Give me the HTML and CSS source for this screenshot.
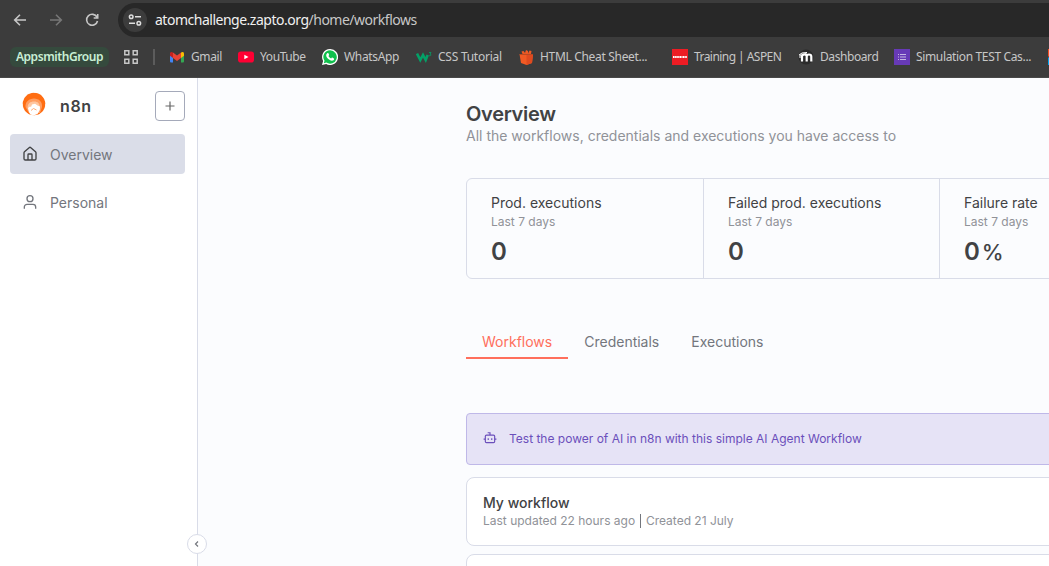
FILE: index.html
```html
<!DOCTYPE html>
<html lang="en">
<head>
<meta charset="utf-8">
<title>n8n - Workflows</title>
<link rel="stylesheet" href="styles.css">
</head>
<body>
<div class="browser">
  <div class="toolbar">
    <svg class="nav-icon" viewBox="0 0 16 16"><path d="M14 8H3M8 2.7 2.7 8 8 13.3"/></svg>
    <svg class="nav-icon dim" viewBox="0 0 16 16"><path d="M2 8h11M8 2.7 13.3 8 8 13.3"/></svg>
    <svg class="nav-icon" viewBox="0 0 16 16"><path d="M13 5.2A5.5 5.5 0 1 0 13.5 9M13.7 2v4H9.7"/></svg>
    <div class="address">
      <span class="site-info"><svg viewBox="0 0 14 14"><circle cx="3.2" cy="3.7" r="1.8"/><path d="M7 3.7h6M1 10.3h6"/><circle cx="10.8" cy="10.3" r="1.8"/></svg></span>
      <span class="url"><span class="host">atomchallenge.zapto.org</span><span class="path">/home/workflows</span></span>
    </div>
  </div>
  <div class="bookmarks">
    <span class="group">AppsmithGroup</span>
    <svg class="apps" viewBox="0 0 14 14"><path d="M.8.8h4v4h-4zM9.2.8h4v4h-4zM.8 9.2h4v4h-4zM9.2 9.2h4v4h-4z"/></svg>
    <span class="sep"></span>
    <div class="links">
      <a class="link"><svg viewBox="0 0 16 16"><path fill="#4285f4" d="M1 4h3v9.500H2a1 1 0 0 1-1-1z"/><path fill="#34a853" d="M12 5h3v7.500a1 1 0 0 1-1 1h-2z"/><path fill="#fbbc04" d="M12 3.500c1.500-1.200 3-.5 3 1v2.200L12 9z"/><path fill="#ea4335" d="M4 3.500 8 6.600l4-3.100V9l-4 3-4-3z"/><path fill="#c5221f" d="M1 4.500c0-1.500 1.500-2.200 3-1V9L1 6.700z"/></svg><span>Gmail</span></a>
      <a class="link"><svg viewBox="0 0 16 16"><rect y="2.500" width="16" height="11" rx="2.800" fill="#ff0033"/><path fill="#fff" d="m6.300 5.700 4.200 2.300-4.200 2.300z"/></svg><span>YouTube</span></a>
      <a class="link"><svg viewBox="0 0 16 16"><path fill="#fff" d="M8 0a8 8 0 1 1-3.800 15L0 16l1.100-4A8 8 0 0 1 8 0z"/><path fill="#10c04d" d="M8 1.300a6.700 6.700 0 1 1-3.600 12.300l-2.600.7.700-2.600A6.700 6.700 0 0 1 8 1.300z"/><path fill="#fff" d="M5.200 4.200c.8-.6 1.200-.2 1.500.6l.4 1c.1.500-.5.800-.7 1.200.6 1.200 1.500 2 2.700 2.500.5-.4.800-1.200 1.300-.9l1.500.8c.5.300.1 1.400-.4 1.800-1.800 1.300-4.700-.4-6.200-2.200C4 7.400 3.700 5.500 5.200 4.200z"/></svg><span class="t-whatsapp">WhatsApp</span></a>
      <a class="link"><svg viewBox="0 0 16 16"><path fill="none" stroke="#04a067" stroke-width="2.600" d="m1 4.500 3.300 6.500 2.700-5 2.700 5 2-5"/><path fill="none" stroke="#04a067" stroke-width=".8" d="M13 3.500h2l-1 1.700c1.500 0 1.300 2-.9 1.500"/></svg><span class="t-css">CSS Tutorial</span></a>
      <a class="link"><svg viewBox="0 0 16 16"><path fill="#f15a24" d="M1.500 5h3L3.500 2.500l2-.5L7 4l1-3 2 1v2.500l1.500-3 2 .5-.5 3h2l-1 9-5.500 2L3 14z"/><path fill="#e04a1f" d="M8.500 6H15l-1 8-5.500 2z"/><path stroke="#8a3a24" stroke-width=".6" d="M2 5.400h13"/></svg><span class="t-html">HTML Cheat Sheet...</span></a>
      <a class="link"><svg viewBox="0 0 16 16"><path fill="#ed1c24" d="M0 0h16v16H0z"/><path stroke="#fff" stroke-width="2" stroke-dasharray="1.500 .4 1 .4" d="M1 8h14"/></svg><span class="t-training">Training | ASPEN</span></a>
      <a class="link"><svg viewBox="0 0 16 16"><circle cx="8" cy="8" r="7.500" fill="#2b2b2b"/><path fill="none" stroke="#fff" stroke-width="2.200" d="M4 12.500V7.300C4 4.800 8.700 4.800 8.700 7.300v5.200M8.700 7.500c0-2.700 4.600-2.700 4.600 0v5"/><path fill="none" stroke="#fff" d="m1 6 3-2 5-.5-3 2.500H2v3"/></svg><span class="t-dashboard">Dashboard</span></a>
      <a class="link"><svg viewBox="0 0 16 16"><path fill="#673ab7" d="M0 0h16v16H0z"/><path stroke="#d1c4e9" stroke-width=".9" d="M4 5.500h1M6 5.500h6M4 8h1M6 8h6M4 10.500h1M6 10.500h6"/></svg><span class="t-simulation">Simulation TEST Cas...</span></a>
      <a class="link"><svg viewBox="0 0 16 16"><path fill="#f25022" d="M0 0h7.500v7.500H0z"/><path fill="#00a4ef" d="M0 8.500h7.500V16H0z"/></svg></a>
    </div>
  </div>
</div>
<div class="app">
  <aside class="sidebar">
    <div class="brand">
      <svg class="logo" viewBox="0 0 24 24"><circle cx="12" cy="12" r="11.300" fill="#ff6d12"/><circle cx="12" cy="12" r="11.800" fill="none" stroke="#fff" stroke-width=".8" stroke-dasharray="2 3"/><path fill="#ff9d61" d="M3.500 15c-.5-5 3.500-8.500 8.500-8.500s8.500 3.500 8 8.500l-2 6H7z"/><path fill="#ffc6a0" d="M5.500 16c0-4.500 2.700-6.500 6.500-6.500s6 2 5.500 6.500l-3 6H8z"/><path fill="#fff" d="m6 16 2-1.500 1 .5 1-2.500 3-.7 2.500 1.700 2.500 1-.2 3.500-2.300 4-4 1.500-3-1L7 20z"/><path fill="none" stroke="#ffad7a" d="m9 18.500 2.500-2 3 1.500"/></svg>
      <span class="brand-name">n8n</span>
      <button class="add"><svg viewBox="0 0 12 12"><path d="M6 1.500v9M1.500 6h9"/></svg></button>
    </div>
    <a class="item active"><svg viewBox="0 0 24 24"><path d="M15 21v-8a1 1 0 0 0-1-1h-4a1 1 0 0 0-1 1v8"/><path d="M3 10a2 2 0 0 1 .7-1.500l7-6a2 2 0 0 1 2.600 0l7 6A2 2 0 0 1 21 10v9a2 2 0 0 1-2 2H5a2 2 0 0 1-2-2z"/></svg><span>Overview</span></a>
    <a class="item"><svg viewBox="0 0 24 24"><circle cx="12" cy="7" r="4.500"/><path d="M3.500 22v-2.500a4 4 0 0 1 4-4h9a4 4 0 0 1 4 4V22"/></svg><span>Personal</span></a>
    <button class="collapse"><svg viewBox="0 0 8 8"><path d="M5 1.500 2.500 4 5 6.500"/></svg></button>
  </aside>
  <main class="main">
    <h1>Overview</h1>
    <p class="subtitle">All the workflows, credentials and executions you have access to</p>
    <div class="stats">
      <div class="stat"><div class="label">Prod. executions</div><div class="period">Last 7 days</div><div class="value">0</div></div>
      <div class="stat"><div class="label">Failed prod. executions</div><div class="period">Last 7 days</div><div class="value">0</div></div>
      <div class="stat"><div class="label">Failure rate</div><div class="period">Last 7 days</div><div class="value">0<span class="unit">%</span></div></div>
    </div>
    <nav class="tabs"><a class="tab selected">Workflows</a><a class="tab">Credentials</a><a class="tab">Executions</a></nav>
    <div class="callout"><svg viewBox="0 0 24 24"><path d="M12 7V3H8"/><rect x="4" y="7" width="16" height="13" rx="2"/><path d="M1 14h3M20 14h3M15 12.500v3M9 12.500v3"/></svg><span>Test the power of AI in n8n with this simple AI Agent Workflow</span></div>
    <div class="card"><div class="card-title">My workflow</div><div class="card-meta">Last updated 22 hours ago <i class="bar"></i> Created 21 July</div></div>
    <div class="card"></div>
  </main>
</div>
</body>
</html>
```

FILE: styles.css
```css
* { box-sizing: border-box; }
body {
  margin: 0;
  width: 1049px;
  height: 566px;
  overflow: hidden;
  font-family: Inter, sans-serif;
  color: #414244;
}
svg { display: block; flex: none; }

/* Browser chrome */
.browser {
  height: 78px;
  background: #3c3c3c;
  border-bottom: 1px solid #484848;
  font-family: "Noto Sans", sans-serif;
  overflow: hidden;
}
.toolbar { display: flex; align-items: center; height: 37px; padding: 3px 0 0 12px; }
.nav-icon { width: 16px; height: 16px; margin-right: 20px; fill: none; stroke: #c7c7c7; stroke-width: 1.6; }
.nav-icon.dim { stroke: #777; }
.nav-icon:nth-child(3) { margin-right: 18px; }
.address {
  display: flex; align-items: center; flex: 1; height: 34px;
  padding-left: 5px; background: #282828; border-radius: 17px 0 0 17px;
}
.site-info { display: grid; place-items: center; width: 24px; height: 24px; border-radius: 50%; background: #3c3c3c; }
.site-info svg { width: 14px; height: 14px; fill: none; stroke: #dedede; stroke-width: 1.5; }
.url { margin-left: 8px; font-size: 14px; line-height: 20px; letter-spacing: -0.49px; white-space: nowrap; }
.host { color: #f0f0f0; }
.path { color: #c7c7c7; }
.bookmarks { display: flex; align-items: center; height: 40px; padding-left: 10px; font-size: 12px; color: #c7c7c7; white-space: nowrap; }
.group { flex: none; width: 99px; height: 20px; border-radius: 6px; background: #354a3d; color: #c9efd5; font-weight: 600; line-height: 20px; text-align: center; letter-spacing: -0.42px; }
.apps { width: 14px; height: 14px; margin-left: 15px; fill: none; stroke: #c7c7c7; stroke-width: 1.5; }
.sep { flex: none; width: 2px; height: 16px; margin: 0 14px 0 15px; background: #5c5c5c; }
.links { flex: none; display: grid; grid-template-columns: 69px 84px 94px 102px 154px 126px 96px 154px 16px; }
.link { display: flex; align-items: center; gap: 6px; line-height: 16px; letter-spacing: -0.4px; }
.link svg { width: 16px; height: 16px; }
.t-whatsapp { letter-spacing: -0.35px; }
.t-css { letter-spacing: -0.25px; }
.t-html { letter-spacing: -0.32px; }
.t-training { letter-spacing: -0.55px; }
.t-dashboard { letter-spacing: -0.42px; }
.t-simulation { letter-spacing: -0.35px; }

/* Application */
.app { display: flex; height: 488px; overflow: hidden; }
.sidebar { position: relative; flex: none; width: 198px; padding: 13px 12px 0 10px; border-right: 1px solid #d9dce8; background: #fff; }
.brand { display: flex; align-items: center; height: 30px; margin-bottom: 13px; padding-left: 12px; }
.logo { width: 24px; height: 24px; margin-top: -5px; }
.brand-name { flex: 1; margin-left: 14px; font-size: 16px; font-weight: 600; letter-spacing: 0.6px; }
.add { display: grid; place-items: center; width: 30px; height: 30px; padding: 0; border: 1px solid #a5aaba; border-radius: 4px; background: #fff; }
.add svg { width: 12px; height: 12px; fill: none; stroke: #666; stroke-width: 1.2; }
.item { display: flex; align-items: center; width: 175px; height: 40px; margin-bottom: 8px; padding-left: 12px; border-radius: 4px; font-size: 14px; color: #73767d; }
.item svg { width: 16px; height: 16px; margin-right: 12px; fill: none; stroke: #73767d; stroke-width: 2; stroke-linejoin: round; }
.item.active { background: #dadde8; }
.item.active svg { stroke: #414244; }
.collapse { position: absolute; right: -10px; bottom: 12px; display: grid; place-items: center; width: 20px; height: 20px; padding: 0; border: 1px solid #d9dce8; border-radius: 50%; background: #fff; }
.collapse svg { width: 8px; height: 8px; fill: none; stroke: #73767d; stroke-width: 1.2; }

.main { flex: none; width: 1119px; padding: 24px 0 0 268px; background: #fbfcfe; }
h1 { margin: 0; font-size: 20px; line-height: 25px; font-weight: 600; letter-spacing: -0.3px; }
.subtitle { margin: 0 0 34px; font-size: 14px; line-height: 17px; color: #909298; }
.stats { display: grid; grid-template-columns: 237px 236px 237px; width: 712px; height: 101px; border: 1px solid #d9dce8; border-radius: 6px; }
.stat { padding: 15px 24px 0; border-right: 1px solid #d9dce8; white-space: nowrap; }
.label { font-size: 14px; line-height: 17px; }
.period { margin-top: 2px; font-size: 12px; line-height: 18px; color: #909298; }
.value { margin-top: 7px; font-size: 24px; line-height: 28px; font-weight: 600; }
.unit { margin-left: 2px; font-size: 22px; font-weight: 500; }
.tabs { display: flex; margin-top: 47px; height: 33px; font-size: 14px; line-height: 32px; color: #73767d; }
.tab { padding: 0 16px; height: 33px; }
.selected { color: #ff6f5c; border-bottom: 2px solid #ff6f5c; }
.callout { display: flex; align-items: center; height: 52px; margin: 54px 0 12px; padding: 0 0 2px 16px; border: 1px solid #bfb8e8; border-radius: 4px; background: #e6e3f6; color: #6b4fbb; font-size: 12px; }
.callout svg { width: 14px; height: 14px; margin-right: 12px; fill: none; stroke: #6b4fbb; stroke-width: 2; }
.card { height: 69px; margin-bottom: 8px; padding: 16px; border: 1px solid #d9dce8; border-radius: 8px; background: #fff; }
.card-title { font-size: 14px; line-height: 18px; font-weight: 500; }
.card-meta { font-size: 12px; line-height: 17px; color: #909298; }
.bar { display: inline-block; width: 1px; height: 14px; margin: 0 2px 0 1px; vertical-align: -3px; background: #73767d; }
```
